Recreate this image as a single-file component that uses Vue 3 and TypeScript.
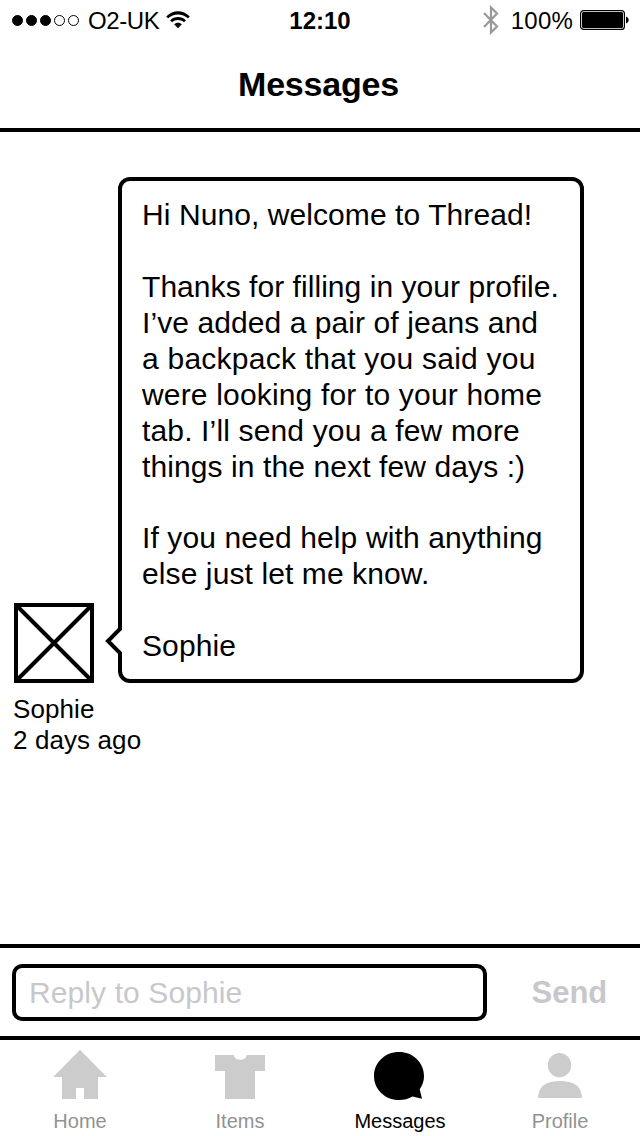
<script setup lang="ts">
interface Line {
  text: string
  tracking: number
}

const signal: boolean[] = [true, true, true, false, false]

const message: Line[] = [
  { text: 'Hi Nuno, welcome to Thread!', tracking: 0.08 },
  { text: '', tracking: 0 },
  { text: 'Thanks for filling in your profile.', tracking: 0.05 },
  { text: 'I’ve added a pair of jeans and', tracking: 0.08 },
  { text: 'a backpack that you said you', tracking: 0.24 },
  { text: 'were looking for to your home', tracking: 0.17 },
  { text: 'tab. I’ll send you a few more', tracking: 0.15 },
  { text: 'things in the next few days :)', tracking: 0.1 },
  { text: '', tracking: 0 },
  { text: 'If you need help with anything', tracking: 0.12 },
  { text: 'else just let me know.', tracking: 0.1 },
  { text: '', tracking: 0 },
  { text: 'Sophie', tracking: 0.1 },
]

const tabs = [
  { id: 'home', label: 'Home', active: false },
  { id: 'items', label: 'Items', active: false },
  { id: 'messages', label: 'Messages', active: true },
  { id: 'profile', label: 'Profile', active: false },
]
</script>

<template>
  <div class="screen">
    <header class="header">
      <div class="status">
        <div class="carrier">
          <span class="signal">
            <i v-for="(on, i) in signal" :key="i" class="dot" :class="{ on }"></i>
          </span>
          <span class="network">O2-UK</span>
          <svg class="wifi" width="24" height="18" viewBox="0 0 24 18">
            <path d="M0.200 5.400C7 -1.500 17 -1.500 23.800 5.400L21.900 7.300C16.400 2.100 7.600 2.100 2.100 7.300Z" />
            <path d="M4.100 9.400C8.500 5 15.500 5 19.900 9.400L18 11.300C14.700 8.200 9.300 8.200 6 11.300Z" />
            <path d="M8.100 13.300C10.200 11.100 13.800 11.100 15.900 13.300L12 17.300Z" />
          </svg>
        </div>
        <div class="clock">12:10</div>
        <div class="power">
          <svg class="bluetooth" width="16" height="30" viewBox="0 0 16 30">
            <path d="M1 8L14 21.500L8 27.500V2.500L14 8.500L1 22" fill="none" stroke="#999" stroke-width="2.200" />
          </svg>
          <span class="percent">100%</span>
          <svg class="battery" width="49" height="20" viewBox="0 0 49 20">
            <rect x="0.6" y="0.6" width="43.8" height="18.8" rx="3" fill="none" stroke="#000" stroke-width="1.2" />
            <rect x="2" y="2" width="41" height="16" rx="1.5" />
            <path d="M46 6.5C48 7.3 48.6 8.6 48.6 10C48.6 11.4 48 12.7 46 13.5Z" />
          </svg>
        </div>
      </div>
      <h1 class="title">Messages</h1>
    </header>

    <main class="thread">
      <svg class="avatar" width="80" height="80" viewBox="0 0 80 80">
        <rect x="2" y="2" width="76" height="76" fill="#fff" stroke="#000" stroke-width="4" />
        <path d="M3 3L77 77M77 3L3 77" stroke="#000" stroke-width="4" />
      </svg>
      <div class="bubble">
        <svg class="tail" width="18" height="30" viewBox="0 0 18 30">
          <path d="M15 3L3 15L15 27H18V3Z" fill="#fff" />
          <path d="M15 0V3L3 15L15 27V30" fill="none" stroke="#000" stroke-width="4" />
        </svg>
        <div v-for="(line, i) in message" :key="i" class="line">
          <span :style="{ letterSpacing: line.tracking + 'px' }">{{ line.text }}</span>
        </div>
      </div>
      <div class="meta">
        <div class="author">Sophie</div>
        <div class="ago">2 days ago</div>
      </div>
    </main>

    <section class="composer">
      <div class="field"><span>Reply to Sophie</span></div>
      <div class="send"><span>Send</span></div>
    </section>

    <nav class="tabs">
      <div v-for="tab in tabs" :key="tab.id" class="tab" :class="[tab.id, { active: tab.active }]">
        <svg class="icon" width="60" height="60" viewBox="0 0 60 60" fill="currentColor">
          <path v-if="tab.id === 'home'" d="M30 9.7L56.8 37H48V59H34V48H26V59H12V37H3.2Z" />
          <path v-else-if="tab.id === 'items'" d="M5 15H23.5A7 6.6 0 0 0 37 15H55V31H45V59H15V31H5Z" />
          <path
            v-else-if="tab.id === 'messages'"
            d="M29 12C43 12 54 22.500 54 36C54 41 52.500 45.500 49.700 49.300L52 58.700L42.500 56.500C38.500 59 34 60 29 60C15 60 4 49.500 4 36C4 22.500 15 12 29 12Z"
          />
          <g v-else>
            <ellipse cx="29.500" cy="25.200" rx="11.700" ry="12.200" />
            <path d="M8 58C8.500 46 16 41 30 41C44 41 51.500 46 52 58Z" />
          </g>
        </svg>
        <span class="label">{{ tab.label }}</span>
      </div>
    </nav>
  </div>
</template>

<style>
body {
  margin: 0;
  background: #fff;
}
</style>

<style scoped>
.screen {
  width: 640px;
  height: 1136px;
  display: flex;
  flex-direction: column;
  overflow: hidden;
  background: #fff;
  color: #000;
  font-family: "Liberation Sans", Arial, sans-serif;
  white-space: nowrap;
}
.header {
  box-sizing: border-box;
  height: 132px;
  border-bottom: 4px solid #000;
}
.status {
  height: 40px;
  display: grid;
  grid-template-columns: 1fr auto 1fr;
  align-items: center;
  font-size: 24px;
  line-height: 40px;
}
.carrier {
  display: flex;
  align-items: center;
  padding-left: 12px;
}
.signal {
  display: flex;
  gap: 3px;
}
.dot {
  box-sizing: border-box;
  width: 11px;
  height: 11px;
  border: 1px solid #000;
  border-radius: 50%;
}
.dot.on {
  background: #000;
}
.network,
.clock,
.percent {
  height: 40px;
  line-height: 42px;
}
.network {
  margin-left: 9px;
  letter-spacing: -0.4px;
}
.wifi {
  margin-left: 7px;
}
.clock {
  font-weight: bold;
}
.power {
  display: flex;
  align-items: center;
  justify-content: flex-end;
  padding-right: 11px;
}
.percent {
  margin: 0 7px 0 12px;
  letter-spacing: 0.2px;
}
.title {
  margin: 0;
  height: 88px;
  padding-right: 3px;
  line-height: 88px;
  font-size: 34px;
  font-weight: bold;
  letter-spacing: -0.2px;
  text-align: center;
}
.thread {
  flex: 1;
  box-sizing: border-box;
  padding: 45px 56px 0 14px;
  display: grid;
  grid-template-columns: 104px 466px;
  grid-template-rows: 506px auto;
  align-content: start;
}
.avatar {
  align-self: end;
  display: block;
}
.bubble {
  position: relative;
  box-sizing: border-box;
  border: 4px solid #000;
  border-radius: 12px;
  padding: 16.3px 0 0 20px;
  font-size: 30px;
}
.tail {
  position: absolute;
  left: -17px;
  top: 445px;
}
.line {
  height: 35.92px;
  line-height: 35.92px;
}
.meta {
  grid-column: 1 / 3;
  margin: 11px 0 0 -1px;
  font-size: 26px;
  line-height: 31px;
  letter-spacing: 0.1px;
}
.composer {
  box-sizing: border-box;
  height: 92px;
  border-top: 4px solid #000;
  padding: 16px 0 0 12px;
  display: flex;
  color: #c8c7cc;
}
.field {
  box-sizing: border-box;
  width: 475px;
  height: 57px;
  border: 4px solid #000;
  border-radius: 10px;
  padding-left: 13px;
  font-size: 30px;
  line-height: 49px;
  letter-spacing: 0.1px;
}
.send {
  margin-left: 44.5px;
  font-size: 31px;
  font-weight: bold;
  line-height: 57px;
}
.tabs {
  box-sizing: border-box;
  height: 100px;
  border-top: 4px solid #000;
  display: grid;
  grid-template-columns: repeat(4, 1fr);
}
.tab {
  display: flex;
  flex-direction: column;
  align-items: center;
  color: #ccc;
}
.icon {
  display: block;
}
.label {
  margin-top: 9px;
  font-size: 20px;
  line-height: 24px;
  color: #929292;
}
.tab.active,
.active .label {
  color: #000;
}
</style>
